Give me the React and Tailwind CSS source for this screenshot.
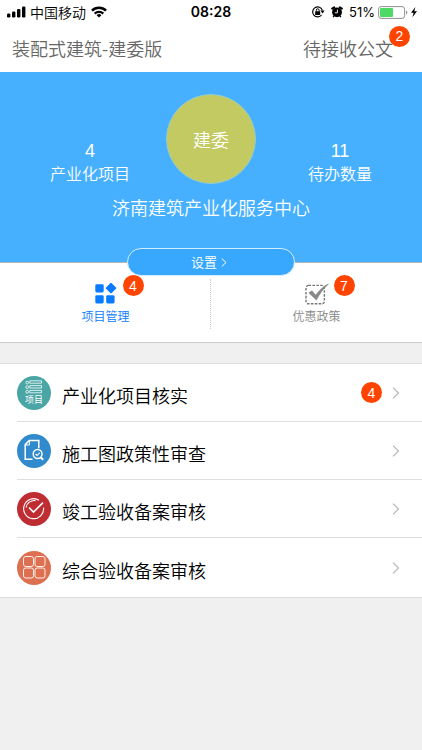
import React from 'react';
import clsx from 'clsx';

const StatusBar = () => (
  <div className="relative flex h-6 items-center justify-between pl-[7px] pr-1 text-black">
    <div className="flex items-center gap-1">
      <svg width="19" height="12" viewBox="0 0 19 12" fill="currentColor">
        <rect x="0" y="7.5" width="3.4" height="4" rx="1.2" />
        <rect x="5" y="5.5" width="3.4" height="6" rx="1.2" />
        <rect x="10" y="3" width="3.4" height="8.5" rx="1.2" />
        <rect x="15" y="0.5" width="3.4" height="11" rx="1.2" />
      </svg>
      <span className="text-[14px] leading-5">中国移动</span>
      <svg className="ml-px" width="16" height="12" viewBox="0 0 16 12" fill="none" stroke="currentColor" strokeWidth="2.4">
        <path d="M0.9 4.6a10.2 10.2 0 0 1 14.2 0" />
        <path d="M3.7 7.6a6.2 6.2 0 0 1 8.6 0" />
        <path d="M8 11.6L5.6 9.3a3.4 3.4 0 0 1 4.8 0z" fill="currentColor" stroke="none" />
      </svg>
    </div>

    <span className="absolute left-1/2 -translate-x-1/2 font-['Inter'] text-[14px] font-semibold leading-5">
      08:28
    </span>

    <div className="flex items-center">
      {/* Rotation lock */}
      <svg width="14" height="14" viewBox="0 0 14 14" fill="none" stroke="currentColor">
        <path d="M11.4 5.4A5 5 0 1 0 10.6 10" strokeWidth="1.2" />
        <path d="M9.4 5.6h4.2L11.6 8.4z" fill="currentColor" stroke="none" />
        <rect x="4.2" y="6.3" width="5" height="3.8" rx="0.4" fill="currentColor" stroke="none" />
        <path d="M5.3 6.5V5.2a1.4 1.4 0 0 1 2.8 0v1.3" />
      </svg>
      {/* Alarm */}
      <svg className="ml-[6px]" width="12" height="12" viewBox="0 0 12 12">
        <circle cx="6" cy="6.3" r="4.9" fill="currentColor" />
        <path d="M1.2 2.6L3.2 1.2M10.8 2.6L8.8 1.2" stroke="currentColor" strokeWidth="2" strokeLinecap="round" />
        <path d="M3 10l-0.8 1.2M9 10l0.8 1.2" stroke="currentColor" strokeWidth="1.4" />
        <path d="M6.4 3.6v3.2H3.8" fill="none" stroke="white" strokeWidth="0.9" />
      </svg>
      <span className="ml-[6px] font-['Inter'] text-[13px] font-normal leading-5">51%</span>
      <svg className="ml-[3px]" width="30" height="13" viewBox="0 0 30 13">
        <rect x="0.6" y="0.6" width="26" height="11.8" rx="2.6" fill="none" stroke="#8e8e93" />
        <rect x="2" y="2" width="13" height="9" rx="1" fill="#4cd964" />
        <path d="M28 4.5a2.2 2.2 0 0 1 0 4z" fill="#8e8e93" />
      </svg>
      <svg className="ml-[2px]" width="8" height="12" viewBox="0 0 8 12" fill="currentColor">
        <path d="M5.4 1L1 6.8h2.6L2.4 11.2 7 5.2H4.3z" />
      </svg>
    </div>
  </div>
);

const Badge = ({ count, className }) => (
  <span
    className={clsx(
      "flex h-[21px] w-[21px] items-center justify-center rounded-full bg-[#ff4400] font-['Liberation_Sans'] text-[14px] leading-none text-white",
      className
    )}
  >
    {count}
  </span>
);

const Stat = ({ value, label, className }) => (
  <div className={clsx('mt-[47px] flex flex-col items-center text-white', className)}>
    <span className="font-['Liberation_Sans'] text-[18px] leading-5">{value}</span>
    <span className="text-[16px] leading-6">{label}</span>
  </div>
);

const ManageIcon = () => (
  <svg width="22" height="21" viewBox="0 0 22 21" fill="currentColor">
    <rect x="0.3" y="1.3" width="8.4" height="8.2" rx="1.4" />
    <rect x="0.3" y="12.2" width="8.4" height="8.2" rx="1.4" />
    <rect x="11.2" y="12.2" width="8.4" height="8.2" rx="1.4" />
    <rect x="12" y="1.1" width="8" height="8" rx="1" transform="rotate(45 16 5.1)" />
  </svg>
);

const PolicyIcon = () => (
  <svg width="24" height="22" viewBox="0 0 24 22" fill="none">
    <rect x="1" y="2.4" width="18.4" height="18.4" rx="2.5" stroke="#777777" strokeWidth="1.4" strokeDasharray="2.6 1.3" />
    <path d="M3.4 9.8l3.6-2.4 3.6 4.3C14 7 18.6 2.8 23.6 0.4l0.3 0.6C19 5.2 14.8 10.8 11.5 17.6z" fill="#888888" />
  </svg>
);

const ProjectIcon = () => (
  <svg width="34" height="34" viewBox="0 0 34 34" fill="none" stroke="white" strokeWidth="0.8">
    <circle cx="10.2" cy="6.6" r="1.4" />
    <circle cx="10.2" cy="11.2" r="1.4" />
    <circle cx="10.2" cy="15.8" r="1.4" />
    <path d="M12.8 4.8h11.7v2.4H12.8zM12.8 9.6h11.7V12H12.8zM12.8 14.4h11.7v2.4H12.8z" />
    <text x="17" y="27" textAnchor="middle" fontSize="9" fontWeight="400" fill="white" stroke="none">项目</text>
  </svg>
);

const DrawingIcon = () => (
  <svg width="34" height="34" viewBox="0 0 34 34" fill="none" stroke="white" strokeWidth="1.5">
    <path d="M15.5 25.2H8.2V10.6l4-4h9.6v7.6" />
    <path d="M8.2 11h4.2V6.6" strokeWidth="1" />
    <circle cx="20.6" cy="20" r="4.4" />
    <path d="M18.6 20l1.5 1.5 2.6-2.8" strokeWidth="1.1" />
    <path d="M23.6 23.2l2.6 2.6" strokeWidth="2" />
  </svg>
);

const AcceptIcon = () => (
  <svg width="34" height="34" viewBox="0 0 34 34" fill="none" stroke="white" strokeWidth="1.1">
    <path d="M22 8.2A10 10 0 1 0 26.6 15.6" />
    <path d="M9 15.6A8.4 8.4 0 0 1 18.5 8.6" />
    <path d="M12 15.5l4.5 4.6L26 10.6" strokeWidth="1.5" />
  </svg>
);

const SummaryIcon = () => (
  <svg width="34" height="34" viewBox="0 0 34 34" fill="none" stroke="white" strokeWidth="0.9">
    <rect x="6.5" y="5.5" width="10" height="10" rx="2.2" />
    <rect x="18" y="5.5" width="10" height="10" rx="2.2" />
    <rect x="6.5" y="17" width="10" height="10" rx="2.2" />
    <rect x="18" y="17" width="10" height="10" rx="2.2" />
  </svg>
);

const Arrow = () => (
  <svg width="8" height="12" viewBox="0 0 8 12" fill="none" stroke="#b8b8b8" strokeWidth="1.2">
    <path d="M1 0.6L6.5 6 1 11.4" />
  </svg>
);

const tabs = [
  { label: '项目管理', icon: ManageIcon, count: 4, active: true },
  { label: '优惠政策', icon: PolicyIcon, count: 7 }
];

const items = [
  { label: '产业化项目核实', icon: ProjectIcon, color: 'bg-[#4aa5a5]', count: 4 },
  { label: '施工图政策性审查', icon: DrawingIcon, color: 'bg-[#308acb]' },
  { label: '竣工验收备案审核', icon: AcceptIcon, color: 'bg-[#bf2d32]' },
  { label: '综合验收备案审核', icon: SummaryIcon, color: 'bg-[#dc7050]' }
];

const App = () => {
  return (
    <div className="min-h-screen bg-[#f0f0f0] font-['Noto_Sans_CJK_SC',sans-serif] font-[350]">
      <div className="bg-white">
        <StatusBar />
        <header className="flex h-12 items-center justify-between pl-3 pr-[29px] text-[18px] text-[#666666]">
          <h1 className="font-[350]">装配式建筑-建委版</h1>
          <a href="#documents" className="relative">
            待接收公文
            <Badge count={2} className="absolute -right-[17px] -top-[9px]" />
          </a>
        </header>
      </div>

      {/* Profile */}
      <section className="relative h-[191px] border-b border-[#b5b5b5] bg-[#46b0ff] pt-[22px] text-white">
        <div className="grid grid-cols-[1fr_auto_1fr] px-[50px]">
          <Stat value={4} label="产业化项目" className="justify-self-start" />
          <div className="flex h-[90px] w-[90px] items-center justify-center rounded-full border border-[#93cbd0] bg-[#c3ca62] text-[18px]">
            建委
          </div>
          <Stat value={11} label="待办数量" className="justify-self-end" />
        </div>
        <p className="mt-[10px] text-center text-[18px] leading-6">济南建筑产业化服务中心</p>
        <button className="absolute -bottom-[14px] left-1/2 z-10 flex h-7 w-[168px] -translate-x-1/2 items-center justify-center gap-1 rounded-full border border-[#d5eeff] bg-[#38a8ff] pr-1 text-[13px]">
          设置
          <svg width="6" height="9" viewBox="0 0 6 9" fill="none" stroke="white">
            <path d="M0.8 0.5L5 4.5 0.8 8.5" />
          </svg>
        </button>
      </section>

      <nav className="relative grid h-20 grid-cols-2 border-b border-[#cccccc] bg-white">
        {tabs.map((tab) => (
          <button
            key={tab.label}
            className={clsx(
              'relative flex flex-col items-center pt-5 text-[12px] leading-5',
              tab.active ? 'text-[#087bff]' : 'text-[#888888]'
            )}
          >
            <span className="flex h-[22px] items-start">
              <tab.icon />
            </span>
            <span className="mt-px">{tab.label}</span>
            <Badge count={tab.count} className="absolute left-1/2 top-3 ml-[17px]" />
          </button>
        ))}
        <div className="absolute left-1/2 top-4 h-[50px] -translate-x-px border-l border-dotted border-[#cccccc]" />
      </nav>

      <ul className="mt-5 border-y border-[#dddddd] bg-white">
        {items.map((item) => (
          <li key={item.label} className="group pl-[17px]">
            <a
              href="#review"
              className="flex h-[58px] items-center border-b border-[#dedede] pr-[22px] group-last:h-[59px] group-last:border-b-0"
            >
              <span className={clsx('h-[34px] w-[34px] rounded-full', item.color)}>
                <item.icon />
              </span>
              <span className="ml-[11px] grow pt-[5px] text-[18px] leading-6 text-black">{item.label}</span>
              {item.count && <Badge count={item.count} className="mr-[10px]" />}
              <Arrow />
            </a>
          </li>
        ))}
      </ul>
    </div>
  );
};

export default App;
